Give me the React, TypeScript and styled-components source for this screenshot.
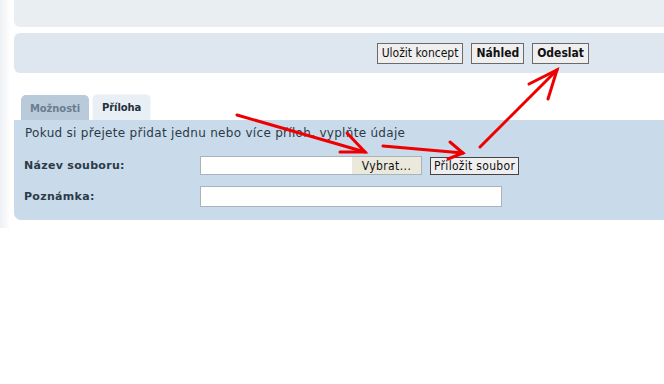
import React from "react";
import styled, { createGlobalStyle } from "styled-components";

const Global = createGlobalStyle`
  html, body { margin: 0; padding: 0; background: #ffffff; }
  body { font-family: "DejaVu Sans", Verdana, sans-serif; }
`;

const Page = styled.div`
  position: relative;
  width: 664px;
  height: 384px;
  overflow: hidden;
  display: flex;
  align-items: flex-start;
`;

const Gutter = styled.div`
  width: 10px;
  height: 228px;
  flex: none;
  background: linear-gradient(to right, #eef1f4, #f8f9fa 70%, #ffffff);
`;

const Main = styled.div`
  flex: 1;
  padding-left: 4px;
  display: flex;
  flex-direction: column;
`;

const TopPanel = styled.div`
  height: 27px;
  background: #e9eef2;
  border-bottom-left-radius: 6px;
`;

const ActionBar = styled.div`
  margin-top: 6px;
  height: 40px;
  background: #dee7ef;
  border-radius: 6px 0 0 6px;
  display: flex;
  align-items: center;
  justify-content: flex-end;
  gap: 8px;
  padding-right: 75px;
`;

const Button = styled.button<{ $bold?: boolean }>`
  height: 21px;
  padding: 0 4px;
  margin: 0;
  background: #efefef;
  border: 1px solid #6a6a6a;
  border-radius: 0;
  color: #111;
  font-family: "DejaVu Sans Condensed", "DejaVu Sans", sans-serif;
  font-size: 12px;
  font-weight: ${(p) => (p.$bold ? 700 : 400)};
  line-height: 19px;
  cursor: pointer;
`;

const TabRow = styled.div`
  margin-top: 21px;
  display: flex;
  align-items: flex-end;
  gap: 3px;
  padding-left: 7px;
  height: 26px;
`;

const Tab = styled.div<{ $active?: boolean }>`
  height: ${(p) => (p.$active ? 26 : 25)}px;
  box-sizing: border-box;
  padding: 0 ${(p) => (p.$active ? 9 : 8)}px;
  display: flex;
  align-items: center;
  border-radius: 5px 5px 0 0;
  font-size: 10px;
  font-weight: 700;
  letter-spacing: -0.1px;
  background: ${(p) => (p.$active ? "#e8eff5" : "#b9cbdb")};
  color: ${(p) => (p.$active ? "#233040" : "#6a7d8f")};
  border: 1px solid ${(p) => (p.$active ? "#f4f8fb" : "#b9cbdb")};
  border-bottom: none;
`;

const Panel = styled.div`
  height: 100px;
  background: #c9dbea;
  border-radius: 0 0 0 7px;
  padding: 5px 0 0 11px;
  box-sizing: border-box;
  color: #2c3a48;
`;

const Intro = styled.div`
  font-size: 12px;
  line-height: 16px;
  height: 31px;
  letter-spacing: 0.3px;
`;

const FormGrid = styled.div`
  display: grid;
  grid-template-columns: 176px auto;
  row-gap: 11px;
  align-items: center;
  margin-left: -1px;
`;

const Label = styled.div`
  font-size: 11px;
  font-weight: 700;
  color: #2c3a48;
  letter-spacing: 0.3px;
`;

const FieldRow = styled.div`
  display: flex;
  align-items: center;
  gap: 8px;
`;

const FileBox = styled.div`
  width: 222px;
  height: 19px;
  box-sizing: border-box;
  border: 1px solid #a9b3bc;
  background: #ffffff;
  display: flex;
  justify-content: flex-end;
`;

const FilePick = styled.div`
  width: 69px;
  background: #ebe8dc;
  font-family: "DejaVu Sans Condensed", "DejaVu Sans", sans-serif;
  font-size: 12px;
  color: #111;
  display: flex;
  align-items: center;
  justify-content: center;
  letter-spacing: 0.4px;
`;

const TextInput = styled.div`
  width: 302px;
  height: 21px;
  box-sizing: border-box;
  border: 1px solid #a9b3bc;
  background: #ffffff;
`;

const SmallButton = styled(Button)`
  height: 18px;
  line-height: 16px;
  padding: 0 3px;
  font-size: 12px;
  border-color: #444;
  letter-spacing: 0.3px;
`;

const Arrows = styled.svg`
  position: absolute;
  left: 0;
  top: 0;
  pointer-events: none;
`;

export default function App() {
  return (
    <>
      <Global />
      <Page>
        <Gutter />
        <Main>
          <TopPanel />
          <ActionBar>
            <Button>Uložit koncept</Button>
            <Button $bold>Náhled</Button>
            <Button $bold>Odeslat</Button>
          </ActionBar>
          <TabRow>
            <Tab>Možnosti</Tab>
            <Tab $active>Příloha</Tab>
          </TabRow>
          <Panel>
            <Intro>Pokud si přejete přidat jednu nebo více příloh, vyplňte údaje</Intro>
            <FormGrid>
              <Label>Název souboru:</Label>
              <FieldRow>
                <FileBox>
                  <FilePick>Vybrat...</FilePick>
                </FileBox>
                <SmallButton>Přiložit soubor</SmallButton>
              </FieldRow>
              <Label>Poznámka:</Label>
              <TextInput />
            </FormGrid>
          </Panel>
        </Main>
        <Arrows width="664" height="384" viewBox="0 0 664 384">
          <g stroke="#ee0000" strokeWidth="3" strokeLinecap="round" fill="none">
            <path d="M237 115 L365 152" />
            <path d="M347 133 L365 152 L340 152" />
            <path d="M383 146 L463 153" />
            <path d="M450 142 L463 153 L448 159" />
            <path d="M480 147 L557 70" />
            <path d="M529 84 L557 70 L548 99" />
          </g>
        </Arrows>
      </Page>
    </>
  );
}
